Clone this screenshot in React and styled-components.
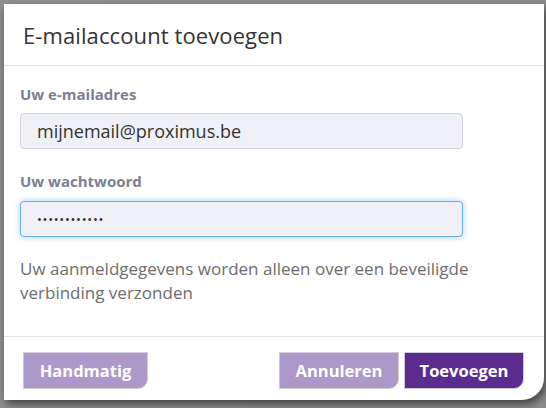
import React from "react";
import styled, { createGlobalStyle } from "styled-components";

const Global = createGlobalStyle`
  html, body { margin: 0; padding: 0; }
  body {
    width: 546px;
    height: 408px;
    overflow: hidden;
    background: #8d8d8d;
    font-family: "Open Sans", "Noto Sans", sans-serif;
  }
`;

const Backdrop = styled.div`
  width: 546px;
  height: 408px;
  padding: 4px 0 0 4px;
  box-sizing: border-box;
  background: linear-gradient(90deg, #909090 0%, #8c8c8c 100%);
`;

const Dialog = styled.div`
  width: 540px;
  height: 396px;
  background: #fff;
  display: flex;
  flex-direction: column;
  border-bottom-right-radius: 22px;
  box-shadow: 2px 4px 8px rgba(0, 0, 0, 0.55);
  overflow: hidden;
`;

const Header = styled.div`
  height: 61px;
  display: flex;
  align-items: center;
  padding: 0 19px;
  border-bottom: 1px solid #e5e5e5;
  flex-shrink: 0;
`;

const Title = styled.h1`
  margin: 0;
  font-size: 22px;
  font-weight: 400;
  color: #333;
  letter-spacing: 0.1px;
`;

const Body = styled.div`
  flex: 1;
  padding: 18px 16px 0;
  display: flex;
  flex-direction: column;
`;

const Label = styled.label`
  display: block;
  font-size: 15px;
  font-weight: 700;
  line-height: 20px;
  color: #7b8090;
  margin-top: ${(p) => (p.$first ? "0" : "22px")};
  margin-bottom: ${(p) => (p.$first ? "9px" : "10px")};
`;

const Input = styled.input`
  width: 443px;
  height: 36px;
  box-sizing: border-box;
  background: #f0f1f6;
  border: 1px solid ${(p) => (p.$focus ? "#66afe9" : "#cfd3e0")};
  border-radius: 4px;
  padding: 0 16px;
  font-family: inherit;
  font-size: ${(p) => (p.$focus ? "13px" : "18px")};
  color: #333;
  outline: none;
  box-shadow: ${(p) =>
    p.$focus ? "0 0 6px rgba(102,175,233,0.6)" : "none"};
  letter-spacing: ${(p) => (p.$focus ? "0.7px" : "0")};
`;

const Help = styled.p`
  margin: 20px 0 0;
  font-size: 17px;
  line-height: 24px;
  color: #6d6d6d;
  width: 500px;
`;

const Footer = styled.div`
  height: 64px;
  flex-shrink: 0;
  border-top: 1px solid #e5e5e5;
  display: flex;
  align-items: flex-start;
  padding: 15px 20px 0 19px;
  box-sizing: border-box;
  gap: 5px;
`;

const Spacer = styled.div`
  flex: 1;
`;

const Button = styled.button`
  height: 37px;
  width: ${(p) => p.$w}px;
  box-sizing: border-box;
  border: 1px solid #cfcbd6;
  border-bottom-right-radius: 10px;
  background: ${(p) => (p.$primary ? "#5c2b8f" : "#ac98c9")};
  color: #fff;
  font-family: inherit;
  font-size: 16.5px;
  font-weight: 700;
  padding: 0;
  cursor: pointer;
`;

export default function App() {
  return (
    <>
      <Global />
      <Backdrop>
        <Dialog>
          <Header>
            <Title>E-mailaccount toevoegen</Title>
          </Header>
          <Body>
            <Label $first>Uw e-mailadres</Label>
            <Input defaultValue="mijnemail@proximus.be" readOnly />
            <Label>Uw wachtwoord</Label>
            <Input $focus type="password" defaultValue="mijnwachtwoo" readOnly />
            <Help>
              Uw aanmeldgegevens worden alleen over een beveiligde verbinding
              verzonden
            </Help>
          </Body>
          <Footer>
            <Button $w={125}>Handmatig</Button>
            <Spacer />
            <Button $w={120}>Annuleren</Button>
            <Button $w={120} $primary>
              Toevoegen
            </Button>
          </Footer>
        </Dialog>
      </Backdrop>
    </>
  );
}
